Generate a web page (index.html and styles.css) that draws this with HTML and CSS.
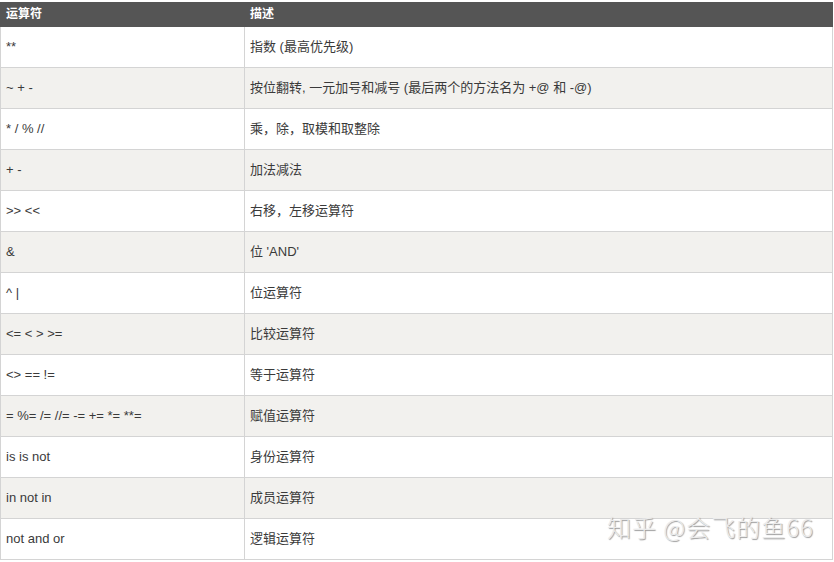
FILE: index.html
```html
<!DOCTYPE html>
<html lang="zh-CN">
<head>
<meta charset="utf-8">
<link rel="stylesheet" href="styles.css">
</head>
<body>
<div class="page">
<table class="ops">
<thead>
<tr><th class="c1">运算符</th><th>描述</th></tr>
</thead>
<tbody>
<tr><td class="c1">**</td><td>指数 (最高优先级)</td></tr>
<tr><td class="c1">~ + -</td><td>按位翻转, 一元加号和减号 (最后两个的方法名为 +@ 和 -@)</td></tr>
<tr><td class="c1">* / % //</td><td>乘，除，取模和取整除</td></tr>
<tr><td class="c1">+ -</td><td>加法减法</td></tr>
<tr><td class="c1">&gt;&gt; &lt;&lt;</td><td>右移，左移运算符</td></tr>
<tr><td class="c1">&amp;</td><td>位 'AND'</td></tr>
<tr><td class="c1">^ |</td><td>位运算符</td></tr>
<tr><td class="c1">&lt;= &lt; &gt; &gt;=</td><td>比较运算符</td></tr>
<tr><td class="c1">&lt;&gt; == !=</td><td>等于运算符</td></tr>
<tr><td class="c1">= %= /= //= -= += *= **=</td><td>赋值运算符</td></tr>
<tr><td class="c1">is is not</td><td>身份运算符</td></tr>
<tr><td class="c1">in not in</td><td>成员运算符</td></tr>
<tr><td class="c1">not and or</td><td>逻辑运算符</td></tr>
</tbody>
</table>
<div class="watermark">知乎 @会飞的鱼66</div>
</div>
</body>
</html>
```
FILE: styles.css
```css
html, body {
  margin: 0;
  padding: 0;
  background: #ffffff;
}
.page {
  position: relative;
  width: 834px;
  height: 562px;
  padding-top: 2px;
  box-sizing: border-box;
  font-family: "Liberation Sans", "Noto Sans CJK SC", sans-serif;
}
.ops {
  width: 833px;
  border-collapse: collapse;
  table-layout: fixed;
  color: #3a3a3a;
  font-size: 13px;
}
.ops th {
  background: #555555;
  color: #ffffff;
  font-weight: bold;
  font-size: 12px;
  text-align: left;
  height: 24px;
  padding: 0 5px;
  box-sizing: border-box;
  border: 1px solid #555555;
  border-top: none;
  line-height: 24px;
}
.ops th.c1 {
  width: 244px;
}
.ops td {
  height: 41px;
  padding: 0 5px;
  box-sizing: border-box;
  border: 1px solid #d4d4d4;
  vertical-align: middle;
  line-height: 18px;
}
.ops tbody tr:nth-child(even) td {
  background: #f2f1ee;
}
.watermark {
  position: absolute;
  left: 607px;
  top: 509px;
  font-size: 24px;
  letter-spacing: 1px;
  color: #ebebeb;
  text-shadow: 1px 1px 1px #9a9a9a;
  font-family: "Noto Sans CJK SC", "Liberation Sans", sans-serif;
  font-weight: 300;
  white-space: nowrap;
}
```
